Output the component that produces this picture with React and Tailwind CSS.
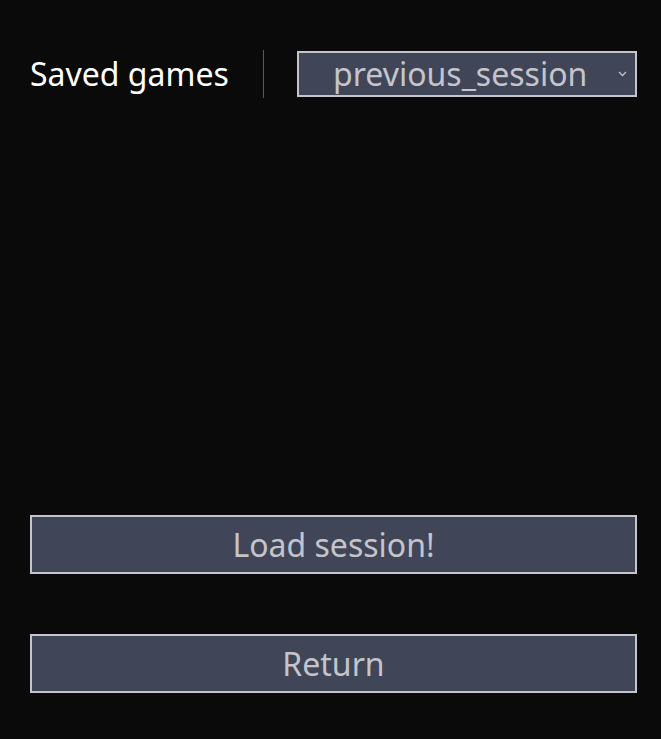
export default function App() {
  return (
    <div
      className="flex h-[739px] w-[661px] flex-col bg-[#0a0a0b] pl-[30px] pr-[24px] pt-[51px]"
      style={{ fontFamily: '"Noto Sans", sans-serif' }}
    >
      <div className="flex h-[46px] items-center">
        <span className="w-[200px] text-[32px] leading-none text-white">Saved games</span>
        <div className="ml-[33px] h-[48px] w-px bg-[#5a5a5e]" />
        <div className="ml-[33px] flex h-[46px] flex-1 items-center border-2 border-[#c4c5cc] bg-[#404557] pl-[34px] pr-[8px]">
          <span className="flex-1 text-left text-[32px] leading-none text-[#c4c5cc]">
            previous_session
          </span>
          <svg width="9" height="6" viewBox="0 0 9 6">
            <path d="M1 1l3.5 3.5L8 1" fill="none" stroke="#c4c5cc" strokeWidth="1.3" />
          </svg>
        </div>
      </div>

      <button className="mt-[418px] flex h-[59px] items-center justify-center border-2 border-[#c4c5cc] bg-[#404557] text-[32px] leading-none text-[#c4c5cc]">
        Load session!
      </button>
      <button className="mt-[60px] flex h-[59px] items-center justify-center border-2 border-[#c4c5cc] bg-[#404557] text-[32px] leading-none text-[#c4c5cc]">
        Return
      </button>
    </div>
  );
}
